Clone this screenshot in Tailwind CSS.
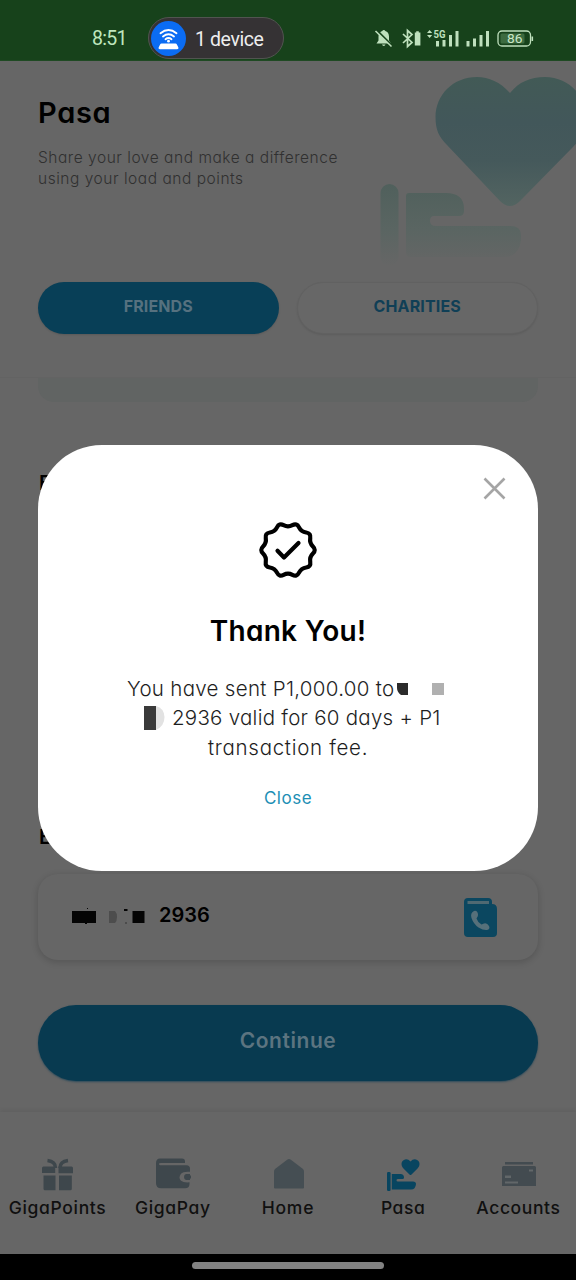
<!DOCTYPE html>
<html lang="en">
<head>
<meta charset="utf-8">
<title>Pasa</title>
<script src="https://cdn.jsdelivr.net/npm/@tailwindcss/browser@4"></script>
</head>
<body class="bg-[#666666]">
<div class="relative w-[576px] h-[1280px] overflow-hidden flex flex-col bg-[#666666] font-[Inter,sans-serif] [font-feature-settings:'cv11'] whitespace-nowrap">

  <!-- Status bar -->
  <div class="h-[61px] shrink-0 bg-[#17421b] pt-[17px] flex items-start border-b border-[#1f4a23]">
    <span class="ml-[92px] w-[56px] mt-[9px] text-[19.5px] leading-[26px] tracking-[-0.7px] text-[#bfe6bd] font-[Roboto,sans-serif]">8:51</span>
    <div class="w-[136px] h-[42px] rounded-full bg-[#353234] border border-[#515450] flex items-center pl-[2px]">
      <svg class="w-[35px] h-[35px]" viewBox="0 0 35 35" fill="none">
        <circle cx="17.5" cy="17.5" r="17.5" fill="#0b6cf3"/>
        <path d="M9.5 12.2Q17.5 5.8 25.5 12.2M12 15.4Q17.5 11 23 15.4M14.5 18.2Q17.5 15.8 20.5 18.2" stroke="#fff" stroke-width="1.9" stroke-linecap="round"/>
        <circle cx="17.5" cy="20.2" r="1.4" fill="#fff"/>
        <path d="M10.5 22.500h14q1 0 1.400 1l1.500 3q.5 1.800-1.300 1.800h-17.200q-1.800 0-1.300-1.800l1.500-3q.4-1 1.400-1z" fill="#fff"/>
      </svg>
      <span class="ml-[9px] mt-[3px] text-[19.5px] leading-[26px] tracking-[-0.4px] text-[#eeeeee] font-[Roboto,sans-serif]">1 device</span>
    </div>
    <svg class="ml-[88px] mt-[9px] w-[164px] h-[24px]" viewBox="372 26 164 24" fill="none">
      <path d="M376.500 43.500h14.500l-2-3v-4c0-3-1.500-5-3.700-5.500a1.600 1.600 0 0 0-3 0c-2.300.6-3.800 2.600-3.800 5.500v4zM382 44.500h3.500a1.800 1.800 0 0 1-3.500 0z" fill="#bfe0bd"/>
      <path d="M376.500 30L392 45.500" stroke="#17421b" stroke-width="2"/>
      <path d="M375.500 31L391.500 46.500" stroke="#bfe0bd" stroke-width="1.600"/>
      <path d="M403 34l9 8.500-4.500 4v-16l4.500 4-9 8.500" stroke="#bfe0bd" stroke-width="1.700"/>
      <path d="M414.800 32.500h1.400v-1.300h2.600v1.300h1.600v13h-5.600z" fill="#bfe0bd"/>
      <path d="M427 33l2.600-3 2.600 3zM427 35l2.600 3 2.600-3z" fill="#bfe0bd"/>
      <path d="M436 41h3v5.500h-3zM442.500 40h3v6.500h-3zM449 35h3v11.500h-3zM455.500 31h3v15.500h-3z" fill="#bfe0bd"/>
      <path d="M466.500 41h3v5.500h-3zM473 38.500h3v8h-3zM479.500 35h3v11.500h-3zM486 31h3v15.500h-3z" fill="#bfe0bd"/>
      <text x="433.500" y="38" font-family="Roboto" font-size="10.500" font-weight="700" textLength="12" lengthAdjust="spacingAndGlyphs" fill="#bfe0bd">5G</text>
      <rect x="498" y="31" width="32.500" height="15" rx="4" stroke="#bfe0bd" stroke-width="1.300"/>
      <rect x="500.500" y="33.500" width="24" height="10" rx="1.500" fill="#3d6b40"/>
      <path d="M532.300 36.500v4.500" stroke="#bfe0bd" stroke-width="1.600"/>
      <text x="507" y="43.300" font-family="Roboto" font-size="13" textLength="15.500" lengthAdjust="spacingAndGlyphs" fill="#c9e6c7">86</text>
    </svg>
  </div>

  <!-- Header -->
  <div class="h-[317px] shrink-0 flex flex-col justify-between border-b border-[#636363]">
    <div class="flex">
      <div class="w-[380px] pl-[38px] pt-[34px]">
        <h1 class="text-[29px] leading-[36px] font-semibold text-black tracking-[0.7px]">Pasa</h1>
        <p class="mt-[16px] text-[15.5px] leading-[21px] font-light text-[#303030] tracking-[0.53px]">Share your love and make a difference<br>using your load and points</p>
      </div>
      <svg class="w-[196px] h-[210px]" viewBox="380 61 196 210">
        <defs>
          <linearGradient id="heart" x1="0" y1="0" x2="0" y2="1"><stop offset="0" stop-color="#425a56"/><stop offset=".35" stop-color="#42575a"/><stop offset=".65" stop-color="#45595b"/><stop offset="1" stop-color="#536461"/></linearGradient>
          <linearGradient id="hand" gradientUnits="userSpaceOnUse" x1="0" y1="184" x2="0" y2="266"><stop offset="0" stop-color="#50605c"/><stop offset=".55" stop-color="#5a6562"/><stop offset="1" stop-color="#666666"/></linearGradient>
        </defs>
        <path d="M510 93C500 82 489 77 477 77C453 77 435.500 95 435.500 117C435.500 130 439 137 447 145L500 201Q510 211 520 201L573 147C582 138 586 130 586 117C586 95 568 77 545 77C530 77 519 82 510 93z" fill="url(#heart)"/>
        <rect x="380.500" y="184" width="18" height="82" rx="9" fill="url(#hand)"/>
        <path d="M409 193H446C457 193 464 198 464 208V211Q464 216 459 216H434Q430 216 430 221Q430 226 436 226H510Q521 226 521 235V240Q519 257 504 257H411Q406 257 406 252V196Q406 193 409 193z" fill="url(#hand)"/>
      </svg>
    </div>
    <div class="flex gap-[18px] px-[38px] pb-[43px]">
      <div class="w-[241px] h-[52px] rounded-full bg-[#083f57] shadow-[0_1px_2px_#00000020] flex justify-center pt-[12px] text-[16px] leading-[24px] font-bold tracking-[0.1px] text-[#56717f]">FRIENDS</div>
      <div class="w-[242px] h-[52px] rounded-full bg-[#676767] border border-[#616161] shadow-[0_1px_2px_#00000018] flex justify-center pt-[11px] text-[16px] leading-[24px] font-bold tracking-[0.15px] text-[#103f56]">CHARITIES</div>
    </div>
  </div>

  <!-- Form -->
  <main class="h-[734px] shrink-0 px-[38px] flex flex-col">
    <div class="h-[24px] rounded-b-[16px] bg-[#616463]"></div>
    <div class="mt-[68px] pl-px text-[20px] leading-[26px] font-semibold text-black">Enter Amount</div>
    <div class="mt-[328px] pl-px text-[20px] leading-[26px] font-semibold text-black">Enter Number</div>
    <div class="mt-[24px] h-[86px] shrink-0 rounded-[20px] bg-[#666666] shadow-[0_2px_6px_1px_#00000024] flex items-center pl-[34px] pr-[41px]">
      <svg class="w-[74px] h-[18px]" viewBox="72 906 74 18">
        <path d="M72 909h24v12h-24zM132.500 909h12v12h-12zM124 907h3.500v2h-3.500zM87 906h1v1h-1zM85 921h2v1h-2z" fill="#050505"/>
        <path d="M109 909h6q2 2 2 6t-2 6h-6z" fill="#4d4d4d"/><path d="M125 920.500h2v1h-2z" fill="#333"/>
      </svg>
      <span class="ml-[13px] mb-[4px] text-[20px] leading-[26px] font-semibold text-black">2936</span>
      <svg class="ml-auto w-[33px] h-[40px]" viewBox="464 897 33 40">
        <path d="M468 898h20q4 0 4 4v2q5 0 5 5v24q0 4-4 4h-25q-4 0-4-4v-31q0-4 4-4z" fill="#0b4760"/>
        <path d="M467.500 901h21.500v3h-21.500z" fill="#4f6972"/>
        <path d="M474 911q-4 2-2.500 7 2 6 7 9.500 5 3 8.500 2.500 3.500-1 2-4-2-3.500-5-2.500l-2.500 1q-4-2.500-5-6 2-2 1.500-4.500-1-4-4-3z" fill="#56707a"/>
      </svg>
    </div>
    <div class="mt-[45px] h-[76px] shrink-0 rounded-full bg-[#083a50] shadow-[0_1px_2px_#2c4b5b] flex justify-center pt-[22px] text-[21px] leading-[28px] font-semibold tracking-[0.55px] text-[#5c7480]">Continue</div>
  </main>

  <!-- Tab bar -->
  <nav class="h-[142px] shrink-0 grid grid-cols-5 pt-[44px] text-[17.5px] leading-[26px] text-[#101010] bg-[#666666] shadow-[0_-2px_4px_#00000010]">
    <div class="flex flex-col items-center gap-[3px]">
      <svg class="w-[36px] h-[36px]" viewBox="40 1156 36 36" fill="#3e474c">
        <path d="M42 1168q0-1.500 1.500-1.500h11.700v6.500h-13.200zM58.500 1166.500h13q1.500 0 1.500 1.500v5.200h-14.500zM43.500 1175.500h12v14.700h-10.500q-1.500 0-1.500-1.500zM59 1175.500h12.800v13.200q0 1.500-1.500 1.500h-11.300z"/>
        <path d="M47.500 1160.500q8 1 8 7.500M68 1160.500q-8 1-8 7.500" fill="none" stroke="#3e474c" stroke-width="3.500"/>
      </svg>
      <span class="font-medium tracking-[0.65px]">GigaPoints</span>
    </div>
    <div class="flex flex-col items-center gap-[3px]">
      <svg class="w-[38px] h-[36px]" viewBox="154 1156 38 36" fill="#3e474c">
        <path fill-rule="evenodd" d="M160 1158.500h22q3 0 3 3v1.500h-24q-2.500 0-2 1.300t2 1h25.500q3.500 0 3.500 3.500v3q-7-.5-9 2-3 4 0 7 2.500 2 8.500 1.500v1.500q0 4.500-4.500 4.500h-24q-5 0-5-5v-20q0-4.800 4-4.800z"/>
        <path d="M186 1174h4v1.500h1v3h-1v1.500h-4q-2-.5-2-3t2-3z"/>
      </svg>
      <span class="font-medium tracking-[0.65px]">GigaPay</span>
    </div>
    <div class="flex flex-col items-center gap-[3px]">
      <svg class="w-[36px] h-[36px]" viewBox="270 1156 36 36" fill="#454e53">
        <path d="M287.500 1159.500q1.500-1 3 0l12.500 9.500q1 1 1 2.500v16q0 1-1 1h-28q-1 0-1-1v-16q0-1.500 1-2.500z"/>
      </svg>
      <span class="font-medium tracking-[0.8px]">Home</span>
    </div>
    <div class="flex flex-col items-center gap-[3px]">
      <svg class="w-[36px] h-[36px]" viewBox="385 1156 36 36" fill="#084560">
        <path d="M410.500 1161.500q-2.500-2.700-5.500-2-3.500 1-3.500 4.500 0 2.500 1.500 4l6.500 6.500q1 1 2 0l6.500-6.500q1.500-1.500 1.500-4 0-3.500-3.500-4.500-3-.7-5.500 2z"/>
        <rect x="387" y="1172" width="3.600" height="19" rx="1.200"/>
        <path d="M391.800 1174h8.700q3.500 0 3.500 3.500 0 1.500-1.500 1.500h-4.500q-1.500 0-1.500 1.300t1.500 1.200h15q3 0 3 2.500-.5 5.500-5 5.500h-19.200z"/>
      </svg>
      <span class="font-medium tracking-[0.6px]">Pasa</span>
    </div>
    <div class="flex flex-col items-center gap-[3px]">
      <svg class="w-[36px] h-[36px]" viewBox="500 1156 36 36" fill="#434b50">
        <path d="M505 1162h28v2.500h-28zM503.500 1166h31q1.500 0 1.500 1.500v18.500h-34v-18.500q0-1.500 1.500-1.500z"/>
        <path d="M505 1175.500h6v2.500h-6zM505 1181.500h13v2h-13zM529 1169.500h4v2h-4z" fill="#626769"/>
      </svg>
      <span class="font-medium tracking-[0.6px]">Accounts</span>
    </div>
  </nav>
  <div class="h-[26px] shrink-0 bg-black flex justify-center pt-[8px]"><div class="w-[192px] h-[7px] rounded-full bg-[#828282]"></div></div>

  <!-- Confirmation dialog -->
  <section class="absolute left-[38px] top-[445px] w-[500px] h-[426px] rounded-[64px] bg-white flex flex-col items-center">
    <svg class="self-end mr-[32px] mt-[32px] w-[23px] h-[23px]" viewBox="0 0 23 23"><path d="M1.500 1.500l20 20M21.500 1.500l-20 20" stroke="#a5a5a5" stroke-width="2.600"/></svg>
    <svg class="mt-[20px] w-[60px] h-[60px]" viewBox="-30 -30 60 60" fill="none" stroke="#000" stroke-width="4.200" stroke-linejoin="round" stroke-linecap="round">
      <path d="M24.950-3.480Q28.500 0 24.950 3.480Q21.400 6.950 22.230 11.850Q23.060 16.750 18.150 17.480Q13.230 18.200 11.020 22.650Q8.810 27.100 4.410 24.800Q0 22.500-4.410 24.800Q-8.810 27.100-11.020 22.650Q-13.230 18.200-18.150 17.480Q-23.060 16.750-22.230 11.850Q-21.400 6.950-24.950 3.480Q-28.500 0-24.950-3.480Q-21.400-6.950-22.230-11.850Q-23.060-16.750-18.150-17.480Q-13.230-18.200-11.020-22.650Q-8.810-27.100-4.410-24.800Q0-22.500 4.410-24.800Q8.810-27.100 11.020-22.650Q13.230-18.200 18.150-17.480Q23.060-16.750 22.230-11.850Q21.400-6.950 24.950-3.480z"/>
      <path d="M-10.500.8L-4 7.500L10.500-7"/>
    </svg>
    <h2 class="mt-[33px] text-[28px] leading-[36px] font-semibold text-black tracking-[0.3px]">Thank You!</h2>
    <div class="mt-[25px] w-full text-[20.5px] leading-[29px] font-light text-[#1e1e1e] flex flex-col">
      <div class="flex items-center pl-[89px]"><span class="w-[267px] tracking-[0.3px]">You have sent P1,000.00 to</span>
        <svg class="ml-[3px] w-[48px] h-[12px]" viewBox="0 0 48 12"><path d="M0 0h11v12h-7q-4-3-4-7z" fill="#2b2b2b"/><path d="M35 0h12v12h-12z" fill="#b0b0b0"/></svg></div>
      <div class="flex items-center pl-[106px]">
        <svg class="w-[21px] h-[24px]" viewBox="0 0 21 24"><path d="M12 0q8 2 8.500 11 0 9-8.500 13z" fill="#e2e2e2"/><path d="M0 0h12v24h-12z" fill="#3a3a3a"/></svg>
        <span class="ml-[7px] tracking-[0.26px]">2936 valid for 60 days + P1</span></div>
      <div class="pl-[170px] mt-px tracking-[0.7px]">transaction fee.</div>
    </div>
    <div class="mt-[24px] text-[17px] leading-[24px] text-[#1d8fb5] tracking-[0.5px]">Close</div>
  </section>
</div>
</body>
</html>
